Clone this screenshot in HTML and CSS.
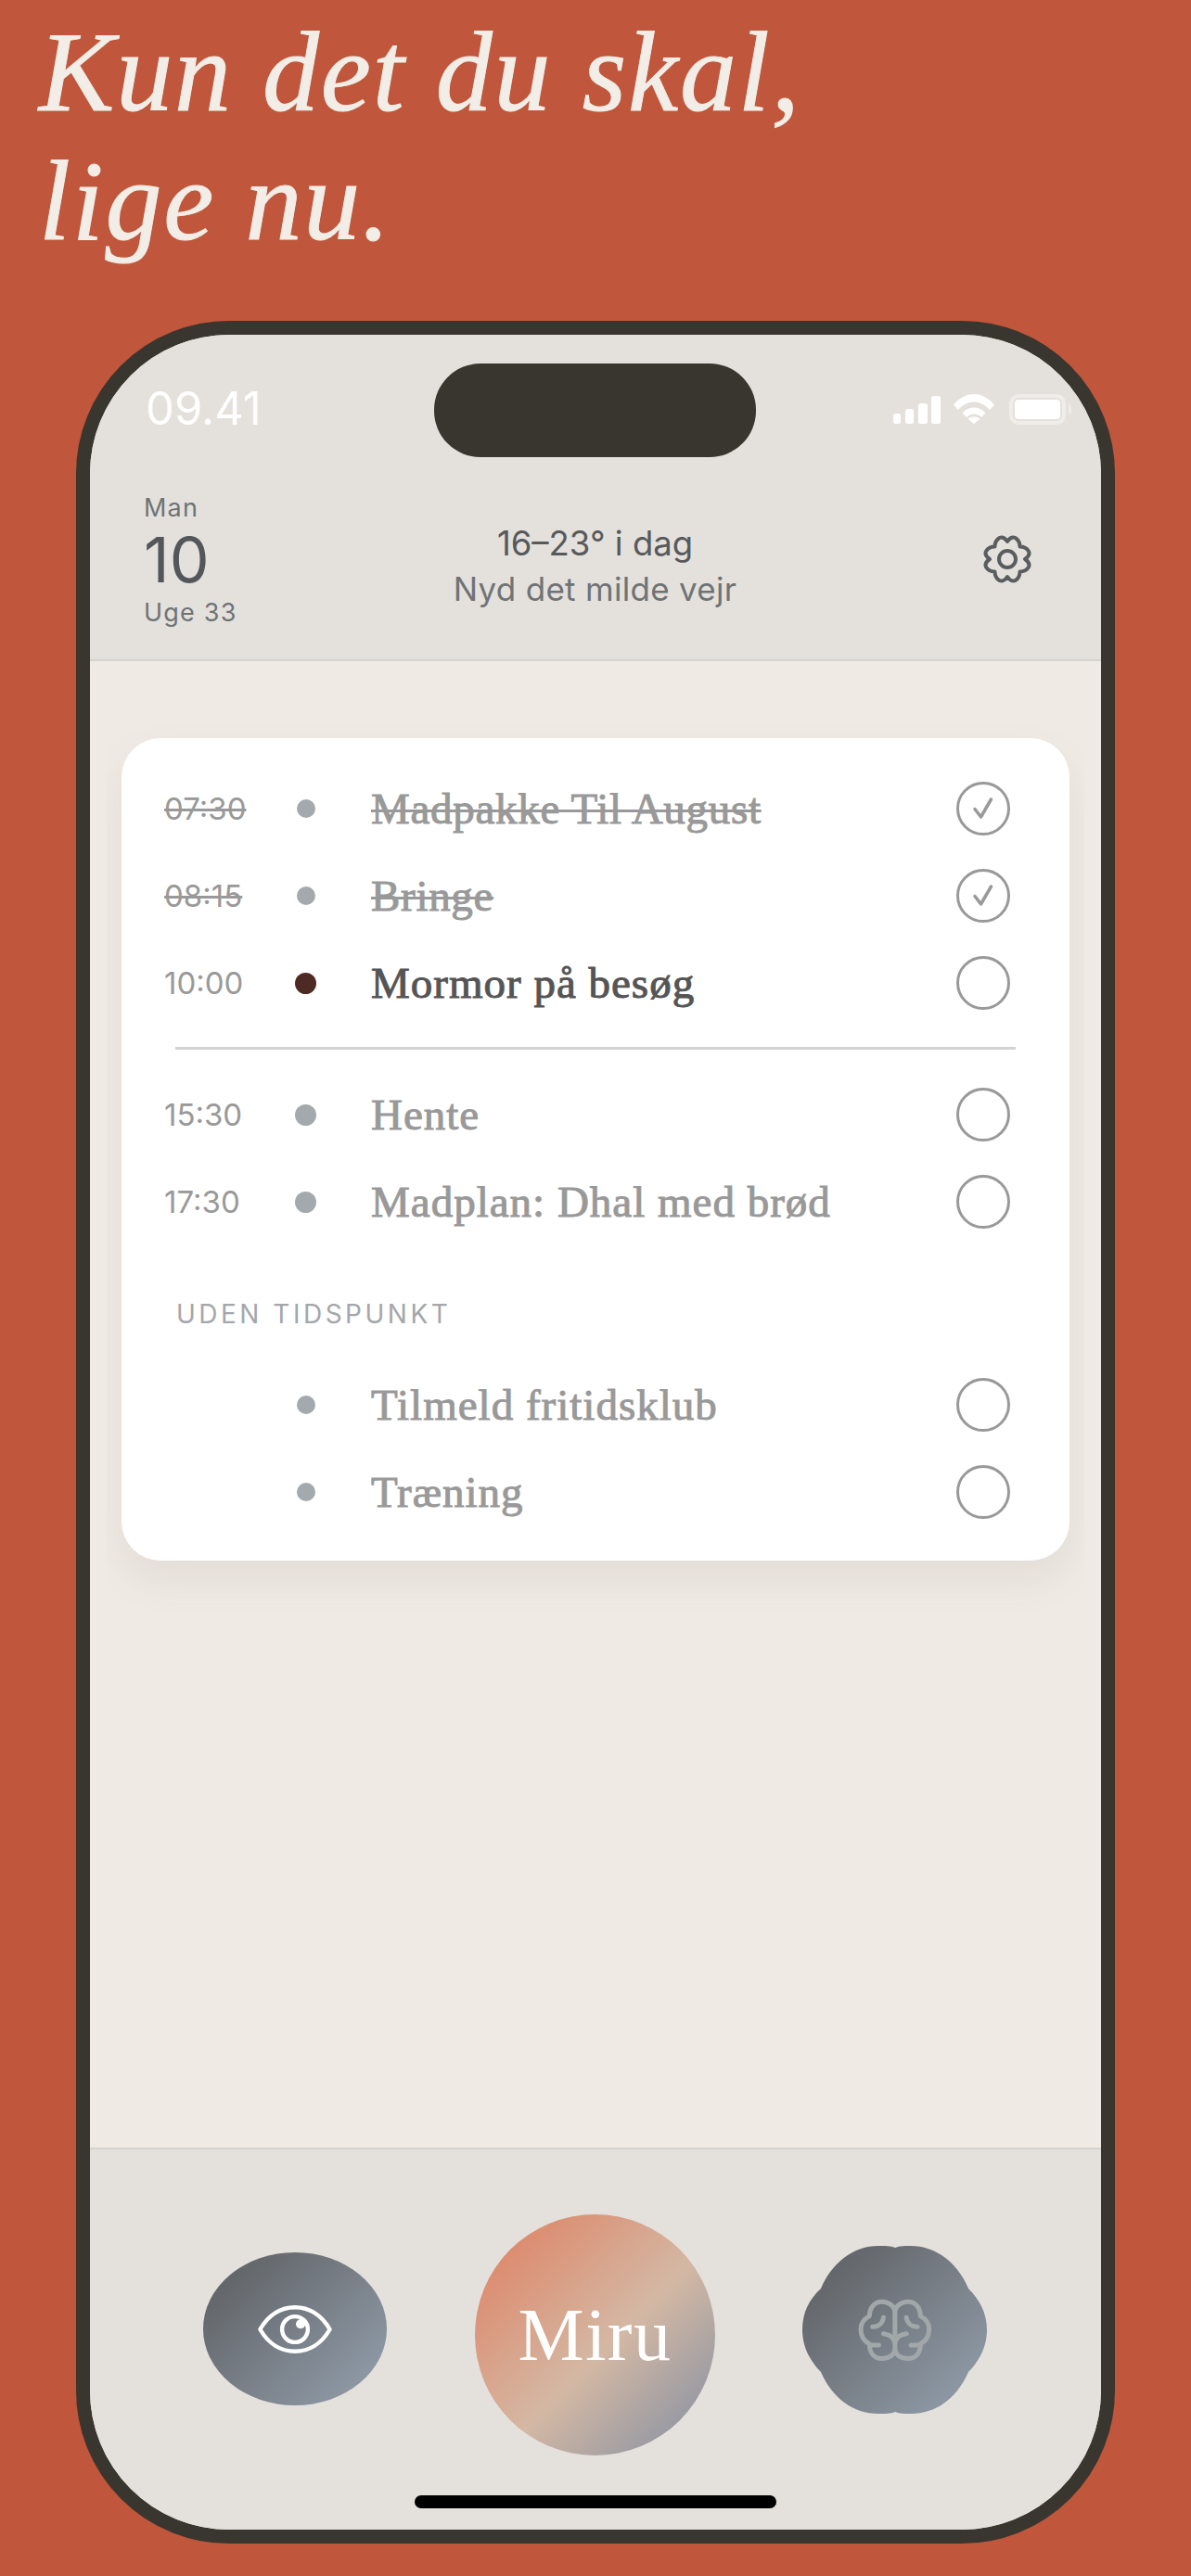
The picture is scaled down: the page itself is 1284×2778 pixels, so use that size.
FILE: index.html
```html
<!DOCTYPE html>
<html lang="da">
<head>
    <meta charset="UTF-8">
    <title>Miru</title>
    <link rel="stylesheet" href="styles.css">
</head>
<body>
    <h1 class="headline">Kun det du skal,<br>lige nu.</h1>

    <div class="phone">
        <header class="top">
            <div class="status">
                <span class="clock">09.41</span>
                <div class="island"></div>
                <div class="status-icons">
                    <svg class="signal" width="51" height="30" viewBox="0 0 51 30" fill="#fff">
                        <rect x="0" y="19" width="8" height="11" rx="2.5"/>
                        <rect x="13" y="14" width="9" height="16" rx="2.5"/>
                        <rect x="27" y="8" width="10" height="22" rx="2.5"/>
                        <rect x="41" y="0" width="10" height="30" rx="2.5"/>
                    </svg>
                    <svg class="wifi" width="44" height="32" viewBox="0 0 44 32" fill="#fff">
                        <path d="M0 11.500C6 4.500 13.500 0 22 0s16 4.500 22 11.500l-5 5.500C34 11.500 28.500 8.500 22 8.500S10 11.500 5 17z"/>
                        <path d="M9.500 20.500C12.500 16.800 17 14.500 22 14.500s9.500 2.300 12.500 6l-4.500 4.500C28 22.800 25 21.500 22 21.500s-6 1.300-8 3.500z"/>
                        <path d="M15.500 27C17 25.300 19.400 24.500 22 24.500s5 .8 6.500 2.500L22 32z"/>
                    </svg>
                    <div class="battery"><div class="battery-fill"></div></div>
                    <div class="battery-nub"></div>
                </div>
            </div>
            <div class="today">
                <div class="date">
                    <div class="date-small">Man</div>
                    <div class="date-num">10</div>
                    <div class="date-small date-week">Uge 33</div>
                </div>
                <div class="weather">
                    <div class="weather-temp">16–23° i dag</div>
                    <div class="weather-note">Nyd det milde vejr</div>
                </div>
                <svg class="gear" width="52" height="52" viewBox="-26 -26 52 52" fill="none" stroke="#5a5d60" stroke-width="4" stroke-linejoin="round">
                    <path d="M19 0Q25 4 23 8.500Q20 13.500 13.500 13.500Q13.500 20 8.500 23Q4 25 0 19Q-4 25 -8.500 23Q-13.500 20 -13.500 13.500Q-20 13.500 -23 8.500Q-25 4 -19 0Q-25 -4 -23 -8.500Q-20 -13.500 -13.500 -13.500Q-13.500 -20 -8.500 -23Q-4 -25 0 -19Q4 -25 8.500 -23Q13.500 -20 13.500 -13.500Q20 -13.500 23 -8.500Q25 -4 19 0Z"/>
                    <circle r="9"/>
                </svg>
            </div>
        </header>

        <main class="content">
            <div class="card-clip">
                <section class="card">
                    <div class="row done">
                        <span class="time">07:30</span>
                        <span class="dot small"></span>
                        <span class="title">Madpakke Til August</span>
                        <span class="check"><svg width="28" height="28" viewBox="0 0 28 28" fill="none" stroke="#999" stroke-width="3.500" stroke-linecap="round" stroke-linejoin="round"><path d="M5 14.500L11.500 23L22.500 4"/></svg></span>
                    </div>
                    <div class="row done">
                        <span class="time">08:15</span>
                        <span class="dot small"></span>
                        <span class="title">Bringe</span>
                        <span class="check"><svg width="28" height="28" viewBox="0 0 28 28" fill="none" stroke="#999" stroke-width="3.500" stroke-linecap="round" stroke-linejoin="round"><path d="M5 14.500L11.500 23L22.500 4"/></svg></span>
                    </div>
                    <div class="row current">
                        <span class="time">10:00</span>
                        <span class="dot"></span>
                        <span class="title">Mormor på besøg</span>
                        <span class="check"></span>
                    </div>

                    <div class="divider"></div>

                    <div class="row">
                        <span class="time">15:30</span>
                        <span class="dot"></span>
                        <span class="title">Hente</span>
                        <span class="check"></span>
                    </div>
                    <div class="row">
                        <span class="time">17:30</span>
                        <span class="dot"></span>
                        <span class="title">Madplan: Dhal med brød</span>
                        <span class="check"></span>
                    </div>

                    <div class="section-label">UDEN TIDSPUNKT</div>

                    <div class="row">
                        <span class="time"></span>
                        <span class="dot small"></span>
                        <span class="title">Tilmeld fritidsklub</span>
                        <span class="check"></span>
                    </div>
                    <div class="row">
                        <span class="time"></span>
                        <span class="dot small"></span>
                        <span class="title">Træning</span>
                        <span class="check"></span>
                    </div>
                </section>
            </div>
        </main>

        <footer class="bottom">
            <nav class="tabs">
                <div class="blob blob-eye">
                    <svg width="82" height="56" viewBox="236 258 242 158" fill="none" stroke="#fff" stroke-width="13" stroke-linejoin="round">
                        <path d="M246 337C272 292 312 267 357 267C402 267 442 292 468 337C442 382 402 407 357 407C312 407 272 382 246 337Z"/>
                        <circle cx="357" cy="337" r="41"/>
                        <circle cx="375" cy="320" r="15" fill="#fff" stroke="none"/>
                    </svg>
                </div>
                <div class="blob blob-miru">Miru</div>
                <div class="blob blob-brain">
                    <svg width="82" height="70" viewBox="225 232 245 208" fill="none" stroke="#a2a7aa" stroke-width="15" stroke-linecap="round" stroke-linejoin="round">
                        <path d="M347 280C347 258 327 244 305 244C281 244 265 263 265 290C246 300 237 315 237 332C237 355 250 372 265 380C265 410 280 427 305 427C330 427 347 414 347 395V280C347 258 367 244 389 244C413 244 429 263 429 290C448 300 457 315 457 332C457 355 444 372 429 380C429 410 414 427 389 427C364 427 347 414 347 395"/>
                        <path d="M310 295C308 312 295 325 275 325M384 295C386 312 399 325 419 325"/>
                        <path d="M310 347C330 350 345 360 347 378C349 360 364 350 384 347"/>
                        <path d="M265 384H295M429 384H399"/>
                    </svg>
                </div>
            </nav>
            <div class="home-bar"></div>
        </footer>
    </div>
</body>
</html>
```

FILE: styles.css
```css
* {
    box-sizing: border-box;
}
html, body {
    margin: 0;
    height: 2778px;
    overflow: hidden;
}
body {
    background-color: #c0563b;
    font-family: "Inter", "Liberation Sans", sans-serif;
}

.headline {
    margin: 0;
    padding: 8px 0 0 42px;
    height: 346px;
    font-family: "Liberation Serif", serif;
    font-style: italic;
    font-weight: 400;
    font-size: 122px;
    line-height: 139px;
    letter-spacing: 1.8px;
    color: #f2ede6;
    -webkit-text-stroke: 1px #f2ede6;
}

.phone {
    margin-left: 82px;
    width: 1120px;
    height: 2397px;
    border: 15px solid #39352f;
    border-radius: 165px;
    overflow: hidden;
    display: flex;
    flex-direction: column;
    background-color: #efeae4;
}

/* top part */
.top {
    height: 352px;
    background-color: #e4e1dc;
    border-bottom: 2px solid #d4d3cf;
}
.status {
    display: grid;
    grid-template-columns: 311px 347px 1fr;
    padding: 31px 0 0 60px;
    height: 132px;
}
.clock {
    font-size: 49px;
    line-height: 54px;
    margin-top: 22px;
    color: #fff;
}
.island {
    height: 101px;
    border-radius: 50px;
    background-color: #39352f;
}
.status-icons {
    display: flex;
    align-items: flex-start;
    padding: 33px 0 0 148px;
}
.signal {
    margin-top: 2px;
}
.wifi {
    margin: 0 16px 0 14px;
}
.battery {
    width: 61px;
    height: 33px;
    padding: 2px;
    border: 4px solid #efedea;
    border-radius: 10px;
}
.battery-fill {
    width: 100%;
    height: 100%;
    background-color: #fff;
    border-radius: 4px;
}
.battery-nub {
    width: 3px;
    height: 10px;
    margin: 11px 0 0 3px;
    border-radius: 0 3px 3px 0;
    background-color: #efedea;
}

.today {
    display: grid;
    grid-template-columns: 1fr auto 1fr;
    align-items: center;
    padding: 0 59px 0 58px;
    height: 218px;
}
.date {
    padding-top: 5px;
}
.date-small {
    font-size: 27px;
    line-height: 34px;
    letter-spacing: 1.2px;
    color: #6f7376;
}
.date-week {
    margin-top: 3px;
}
.date-num {
    font-size: 68px;
    line-height: 76px;
    color: #54575a;
}
.weather {
    text-align: center;
    margin-top: 16px;
}
.weather-temp {
    font-size: 36.5px;
    line-height: 50px;
    color: #58595b;
}
.weather-note {
    font-size: 35px;
    line-height: 49px;
    letter-spacing: 0.3px;
    color: #6f7376;
}
.gear {
    justify-self: end;
    margin: 2px 16px 0 0;
}

/* list */
.content {
    flex: 1;
}
.card-clip {
    overflow: hidden;
    margin: 0 18px;
    padding: 83px 16px 55px 16px;
}
.card {
    padding: 29px 64px 27px 46px;
    background-color: #fff;
    border-radius: 42px;
    box-shadow: 0 20px 40px rgba(120, 110, 90, 0.1);
}
.row {
    display: grid;
    grid-template-columns: 142px 21px 1fr 58px;
    align-items: center;
    height: 94px;
    color: #999;
}
.time {
    font-size: 33px;
    color: #999;
}
.dot {
    justify-self: center;
    width: 23px;
    height: 23px;
    border-radius: 50%;
    background-color: #a4a9ad;
}
.dot.small {
    width: 20px;
    height: 20px;
}
.title {
    margin-left: 60px;
    font-family: "Liberation Serif", serif;
    font-size: 47px;
    letter-spacing: 1px;
    -webkit-text-stroke: 1px currentColor;
}
.check {
    width: 58px;
    height: 58px;
    display: flex;
    align-items: center;
    justify-content: center;
    border: 3.5px solid #999;
    border-radius: 50%;
}
.done .time,
.done .title {
    text-decoration: line-through;
}
.done .title {
    letter-spacing: 0.7px;
    text-decoration-thickness: 3px;
}
.current .title {
    color: #555;
}
.current .dot {
    background-color: #4d2a24;
}
.divider {
    height: 3px;
    margin: 22px 0 23px 12px;
    width: 906px;
    background-color: #d3d3d3;
}
.section-label {
    height: 125px;
    padding: 55px 0 0 13px;
    font-size: 28px;
    line-height: 38px;
    letter-spacing: 3.5px;
    color: #a4a7aa;
}

/* bottom part */
.bottom {
    height: 412px;
    background-color: #e4e1dc;
    border-top: 2px solid #d4d3cf;
    display: flex;
    flex-direction: column;
}
.tabs {
    display: flex;
    align-items: flex-start;
    gap: 94px;
    padding: 70px 0 0 122px;
}
.blob {
    display: flex;
    align-items: center;
    justify-content: center;
    background-image: linear-gradient(135deg, #63666a 15%, #8c97a3 85%);
}
.blob-eye {
    width: 198px;
    height: 165px;
    margin-top: 41px;
    margin-right: 1px;
    border-radius: 50%;
}
.blob-miru {
    width: 259px;
    height: 260px;
    border-radius: 50%;
    background-image: linear-gradient(135deg, #dd8a6d 12%, #d4b8a4 55%, #8e95a3 92%);
    font-family: "Liberation Serif", serif;
    font-size: 80px;
    letter-spacing: 1.5px;
    color: #fff;
}
.blob-brain {
    width: 199px;
    height: 181px;
    margin-top: 34px;
    clip-path: path("M100 2C95 0 90 0 82 0C55 0 32 18 20 46C7 58 0 72 0 91C0 108 8 124 20 136C32 164 55 181 82 181C90 181 95 181 100 179C105 181 110 181 117 181C144 181 167 164 179 136C191 124 199 108 199 91C199 72 191 58 179 46C167 18 144 0 117 0C110 0 105 0 100 2Z");
}
.home-bar {
    align-self: center;
    width: 390px;
    height: 14px;
    margin-top: 43px;
    border-radius: 7px;
    background-color: #000;
}
```
